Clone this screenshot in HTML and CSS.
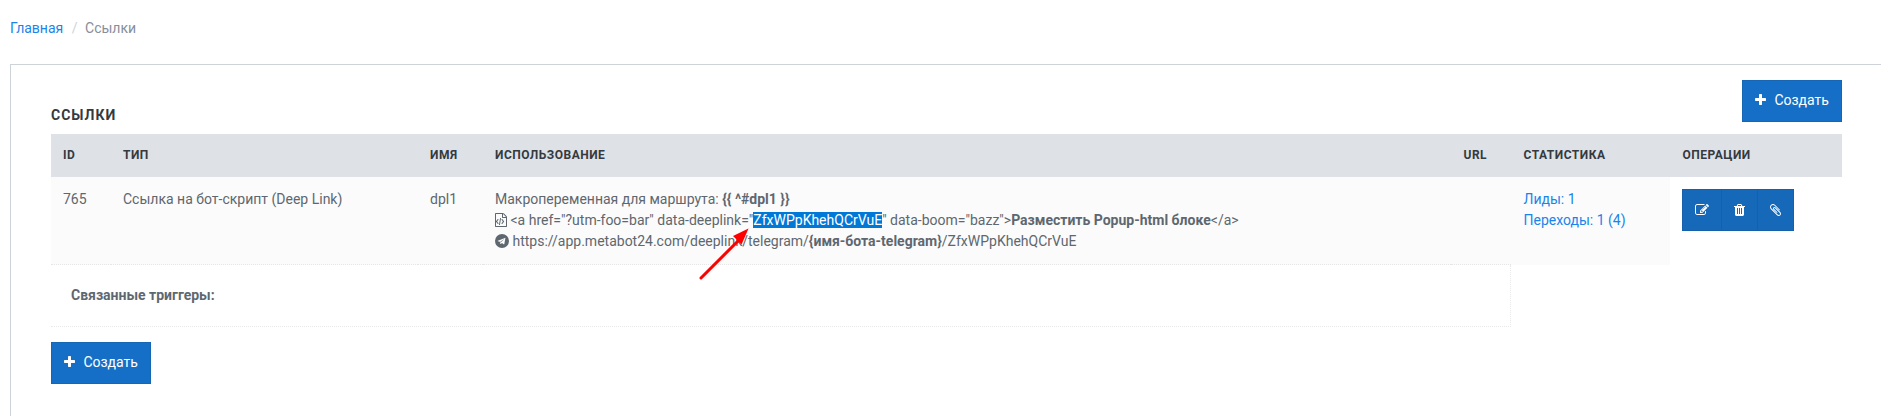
FILE: index.html
```html
<!DOCTYPE html>
<html lang="ru">
<head>
<meta charset="utf-8">
<title>Ссылки</title>
<link rel="stylesheet" href="styles.css">
</head>
<body>
<svg class="sprite" aria-hidden="true">
  <symbol id="plus" viewBox="192 0 1408 1792"><path d="M1600 736v192q0 40-28 68t-68 28h-416v416q0 40-28 68t-68 28h-192q-40 0-68-28t-28-68v-416h-416q-40 0-68-28t-28-68v-192q0-40 28-68t68-28h416v-416q0-40 28-68t68-28h192q40 0 68 28t28 68v416h416q40 0 68 28t28 68z"/></symbol>
</svg>
<nav class="breadcrumb"><a href="#">Главная</a><span class="sep">/</span><span>Ссылки</span></nav>
<main class="panel">
  <div class="panel-head">
    <h1>Ссылки</h1>
    <a class="btn" href="#"><svg class="plus"><use href="#plus"/></svg>Создать</a>
  </div>
  <table class="links">
    <colgroup><col class="c-id"><col class="c-type"><col class="c-name"><col class="c-usage"><col class="c-url"><col class="c-stat"><col class="c-ops"></colgroup>
    <thead>
      <tr><th>ID</th><th>Тип</th><th>Имя</th><th>Использование</th><th>URL</th><th>Статистика</th><th>Операции</th></tr>
    </thead>
    <tbody>
      <tr class="item">
        <td>765</td>
        <td>Ссылка на бот-скрипт (Deep Link)</td>
        <td>dpl1</td>
        <td class="usage">
          <div>Макропеременная для маршрута: <b>{{ ^#dpl1 }}</b></div>
          <div><svg class="ico file" viewBox="128 0 1536 1792"><path d="M1596 380q28 28 48 76t20 88v1152q0 40-28 68t-68 28h-1344q-40 0-68-28t-28-68v-1600q0-40 28-68t68-28h896q40 0 88 20t76 48zm-444-244v376h376q-10-29-22-41l-313-313q-12-12-41-22zm384 1528v-1024h-416q-40 0-68-28t-28-68v-416h-768v1536h1280zm-1056-896q8-11 21-12.5t24 6.5l51 38q11 8 12.5 21t-6.5 24l-182 243 182 243q8 11 6.5 24t-12.5 21l-51 38q-11 8-24 6.5t-21-12.5l-226-301q-14-19 0-38zm802 301q14 19 0 38l-226 301q-8 11-21 12.5t-24-6.5l-51-38q-11-8-12.5-21t6.5-24l182-243-182-243q-8-11-6.5-24t12.5-21l51-38q11-8 24-6.5t21 12.5zm-620 461q-13-2-20.5-13t-5.5-24l138-831q2-13 13-20.5t24-5.5l63 10q13 2 20.5 13t5.5 24l-138 831q-2 13-13 20.5t-24 5.5z"/></svg> &lt;a href="?utm-foo=bar" data-deeplink="<span class="selected">ZfxWPpKhehQCrVuE<svg class="arrow" viewBox="0 0 54 56"><path class="shaft" d="M4 52L42 14"/><path class="tip" d="M51.5 2.5L36 10L44.5 18.5Z"/></svg></span>" data-boom="bazz"&gt;<b>Разместить Popup-html блоке</b>&lt;/a&gt;</div>
          <div><svg class="ico tg" viewBox="0 0 14 14"><path fill-rule="evenodd" d="M7 0a7 7 0 1 0 0 14a7 7 0 0 0 0-14zM10.45 3.7L9.3 10.1q-.12.5-.6.25L6.9 9.05L5.9 10q-.3.25-.45-.1L4.8 7.75L2.9 7.15q-.45-.2 0-.45L9.9 3.95q.55-.25.55.2zM5.35 7.65L5.6 9.3L5.9 8.35L9.2 5.3q.1-.2-.2-.1z"/></svg> https://app.metabot24.com/deeplink/telegram/<b>{имя-бота-telegram}</b>/ZfxWPpKhehQCrVuE</div>
        </td>
        <td></td>
        <td><a href="#">Лиды: 1</a><br><a href="#">Переходы: 1 (4)</a></td>
        <td class="ops">
          <div class="btn-group">
            <a href="#"><svg class="w14" viewBox="0 0 1792 1792"><path d="M888 1184l116-116-152-152-116 116v56h96v96h56zm440-720q-16-16-33 1l-350 350q-17 17-1 33t33-1l350-350q17-17 1-33zm80 594v190q0 119-84.5 203.5t-203.5 84.5h-832q-119 0-203.5-84.5t-84.5-203.5v-832q0-119 84.5-203.5t203.5-84.5h832q63 0 117 25 15 7 18 23 3 17-9 29l-49 49q-14 14-32 8-23-6-45-6h-832q-66 0-113 47t-47 113v832q0 66 47 113t113 47h832q66 0 113-47t47-113v-126q0-13 9-22l64-64q15-15 35-7t20 29zm-96-738l288 288-672 672h-288v-288zm444 132l-92 92-288-288 92-92q28-28 68-28t68 28l152 152q28 28 28 68t-28 68z"/></svg></a>
            <a href="#"><svg class="w11" viewBox="192 0 1408 1792"><path d="M704 1376v-704q0-14-9-23t-23-9h-64q-14 0-23 9t-9 23v704q0 14 9 23t23 9h64q14 0 23-9t9-23zm256 0v-704q0-14-9-23t-23-9h-64q-14 0-23 9t-9 23v704q0 14 9 23t23 9h64q14 0 23-9t9-23zm256 0v-704q0-14-9-23t-23-9h-64q-14 0-23 9t-9 23v704q0 14 9 23t23 9h64q14 0 23-9t9-23zm-544-992h448l-48-117q-7-9-17-11h-317q-10 2-17 11zm928 32v64q0 14-9 23t-23 9h-96v948q0 83-47 143.5t-113 60.5h-832q-66 0-113-58.5t-47-141.5v-952h-96q-14 0-23-9t-9-23v-64q0-14 9-23t23-9h309l70-167q15-37 54-63t79-26h320q40 0 79 26t54 63l70 167h309q14 0 23 9t9 23z"/></svg></a>
            <a href="#"><svg class="w11" viewBox="192 0 1408 1792"><path d="M1596 1385q0 117-79 196t-196 79q-135 0-235-100l-777-776q-113-115-113-271 0-159 110-270t269-111q158 0 273 113l605 606q10 10 10 22 0 16-30.5 46.5t-46.5 30.5q-13 0-23-10l-606-607q-79-77-181-77-106 0-179 75t-73 181q0 105 76 181l776 777q63 63 145 63 64 0 106-42t42-106q0-82-63-145l-581-581q-26-24-60-24-29 0-48 19t-19 48q0 32 25 59l410 410q10 10 10 22 0 16-31 47t-47 31q-12 0-22-10l-410-410q-63-61-63-149 0-82 57-139t139-57q88 0 149 63l581 581q100 98 100 235z"/></svg></a>
          </div>
        </td>
      </tr>
      <tr><td class="triggers" colspan="5"><b>Связанные триггеры:</b></td></tr>
    </tbody>
  </table>
  <a class="btn" href="#"><svg class="plus"><use href="#plus"/></svg>Создать</a>
</main>
</body>
</html>
```

FILE: styles.css
```css
* { box-sizing: border-box; }
body {
  margin: 0;
  height: 416px;
  overflow: hidden;
  display: flex;
  flex-direction: column;
  background: #fff;
  color: #5e676f;
  font: 14px/21px Roboto, sans-serif;
}
a { color: #1a84ea; text-decoration: none; }
b { font-weight: 700; }
svg { fill: currentColor; }
.sprite { display: none; }

.breadcrumb {
  display: flex;
  flex: none;
  height: 64px;
  padding: 18px 10px 0;
  color: #868e9b;
}
.sep { padding: 0 7.5px 0 8.5px; color: #ced4da; }

.panel {
  flex: 1;
  margin-left: 10px;
  padding: 15px 39px 0 40px;
  border: solid #ced3da;
  border-width: 1px 0 0 1px;
}
.panel-head {
  display: flex;
  justify-content: space-between;
  height: 54px;
}
h1 {
  margin: 25px 0 0;
  color: #343a40;
  font-size: 14px;
  line-height: 21px;
  font-weight: 700;
  letter-spacing: 1px;
  text-transform: uppercase;
}

.btn {
  display: inline-flex;
  align-items: center;
  width: 100px;
  height: 42px;
  padding: 0 0 2px 12px;
  border: 1px solid #1566b5;
  background: #156fc7;
  color: #fff;
}
.plus { width: 11px; height: 14px; margin-right: 8.4px; }

.links {
  width: 1791px;
  margin-bottom: 15px;
  border-collapse: separate;
  border-spacing: 0;
  table-layout: fixed;
}
.c-id { width: 60px; }
.c-type { width: 307px; }
.c-name { width: 65px; }
.c-usage { width: 968px; }
.c-url { width: 60px; }
.c-stat { width: 159px; }
.c-ops { width: 172px; }
th {
  height: 43px;
  padding: 0 12px 2px;
  background: #dee1e6;
  color: #343a40;
  font-size: 12px;
  line-height: 18px;
  font-weight: 700;
  letter-spacing: .5px;
  text-align: left;
  text-transform: uppercase;
}
td { padding: 12px; vertical-align: top; }
th:nth-child(n+5), .item td:nth-child(6) { padding-left: 12.5px; }
.item td { height: 88px; background: #fbfbfb; }
.item td:nth-child(-n+5) { padding-bottom: 11px; border-bottom: 1px dotted #e6e6e6; }
.item .ops { background: #fff; }
.usage { white-space: nowrap; }
.ico { height: 14px; vertical-align: -2px; }
.file { width: 12px; }
.tg { width: 14px; }
.selected { position: relative; background: #0078d7; color: #fff; }
.arrow {
  position: absolute;
  left: -56px;
  top: 14px;
  width: 54px;
  height: 56px;
}
.shaft { fill: none; stroke: #f00; stroke-width: 3; stroke-linecap: round; }
.tip { fill: #f00; }

.btn-group { display: flex; width: 112px; height: 42px; border: 1px solid #1560ab; background: #1569b8; }
.btn-group a { flex: 0 0 36px; display: flex; align-items: center; padding-left: 12px; color: #fff; }
.btn-group a:first-child { flex-basis: 38px; }
.btn-group a + a { border-left: 1px solid #1560ab; }
.w14 { width: 14px; height: 14px; }
.w11 { width: 11px; height: 14px; }

.triggers {
  height: 62px;
  padding: 20px;
  border: dotted #e9e9e9;
  border-width: 0 1px 1px 0;
}
```
